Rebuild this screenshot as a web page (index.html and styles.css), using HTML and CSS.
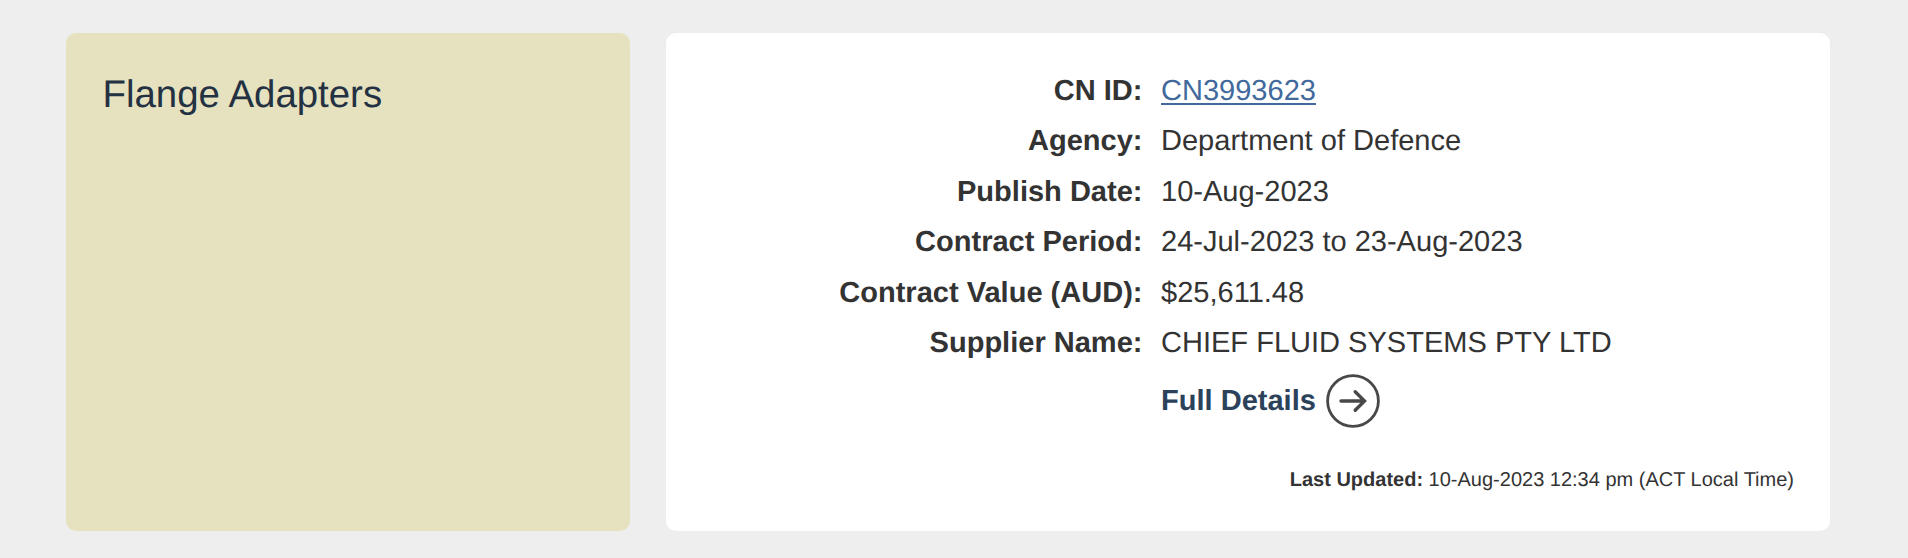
FILE: index.html
```html
<!DOCTYPE html>
<html lang="en">
<head>
  <meta charset="UTF-8" />
  <meta name="viewport" content="width=device-width, initial-scale=1.0"/>
  <title>Flange Adapters</title>
  <link rel="stylesheet" href="styles.css">
</head>
<body>

  <article class="notice">
    <div class="summary">
      <h2>Flange Adapters</h2>
    </div>

    <div class="details">
      <dl class="fields">
        <dt>CN ID:</dt>
        <dd><a class="cn-link" href="#">CN3993623</a></dd>
        <dt>Agency:</dt>
        <dd>Department of Defence</dd>
        <dt>Publish Date:</dt>
        <dd>10-Aug-2023</dd>
        <dt>Contract Period:</dt>
        <dd>24-Jul-2023 to 23-Aug-2023</dd>
        <dt>Contract Value (AUD):</dt>
        <dd>$25,611.48</dd>
        <dt>Supplier Name:</dt>
        <dd>CHIEF FLUID SYSTEMS PTY LTD</dd>
      </dl>

      <a class="full-details" href="#">
        <span>Full Details</span>
        <svg class="arrow" viewBox="0 0 54 54" fill="none" stroke="#484848">
          <circle cx="27" cy="27" r="25.4" stroke-width="2.8"/>
          <path d="M15 27H38.5M29.2 17.7L38.5 27L29.2 36.3" stroke-width="3.4" stroke-linecap="round"/>
        </svg>
      </a>

      <p class="updated"><strong>Last Updated:</strong> 10-Aug-2023 12:34 pm (ACT Local Time)</p>
    </div>
  </article>

</body>
</html>
```

FILE: styles.css
```css
:root {
  --page-bg: #eeeeee;
  --summary-bg: #e6e1be;
  --text: #333333;
  --heading: #233142;
  --link: #41699c;
}

body {
  margin: 0;
  background-color: var(--page-bg);
  color: var(--text);
  font-family: Arial, "Liberation Sans", sans-serif;
  font-size: 29.04px;
  text-rendering: geometricPrecision;
}

.notice {
  display: grid;
  grid-template-columns: 564px 1164px;
  gap: 36px;
  height: 498px;
  padding: 33px 66px 27px;
}

.summary,
.details {
  box-sizing: border-box;
  border-radius: 10px;
}

.summary {
  background-color: var(--summary-bg);
  padding: 39px 36.5px;
}

.summary h2 {
  margin: 0;
  color: var(--heading);
  font-size: 38.4px;
  font-weight: normal;
  line-height: 46px;
}

.details {
  background-color: white;
  padding: 32.5px 36px 0;
}

.fields {
  display: grid;
  grid-template-columns: 440.5px 1fr;
  column-gap: 18.5px;
  margin: 0;
  line-height: 50.6px;
}

.fields dt {
  font-weight: bold;
  text-align: right;
}

.fields dd {
  margin: 0;
}

.cn-link {
  color: var(--link);
  text-decoration: underline;
  text-decoration-thickness: 2px;
  text-underline-offset: 3px;
}

.full-details {
  display: flex;
  align-items: center;
  gap: 10px;
  margin: 5px 0 0 459px;
  color: #2c425a;
  font-weight: bold;
  text-decoration: none;
}

.arrow {
  width: 54px;
  height: 54px;
}

.updated {
  margin: 39.5px 0 0;
  font-size: 20px;
  line-height: 24px;
  text-align: right;
}
```
